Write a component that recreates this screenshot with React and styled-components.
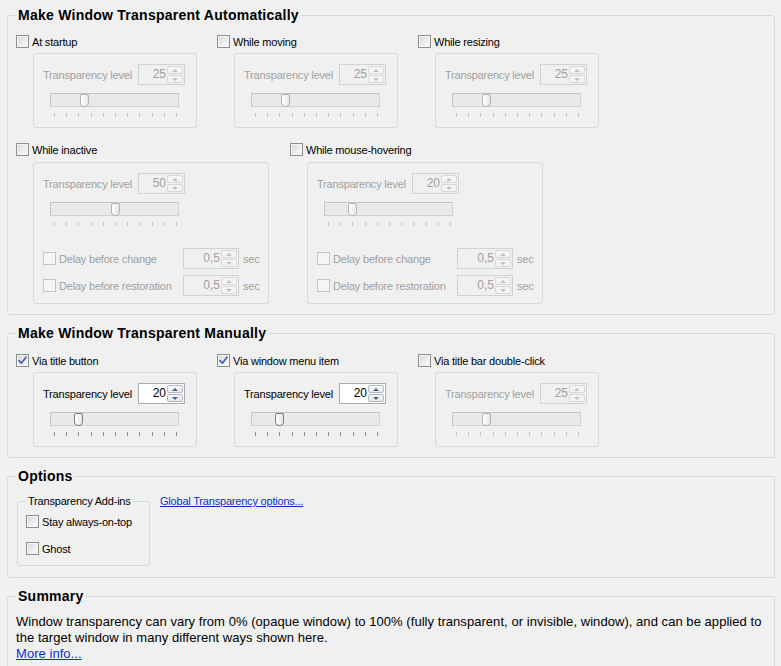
import React from "react";
import styled, { createGlobalStyle } from "styled-components";

const GlobalStyle = createGlobalStyle`
  body {
    margin: 0;
    background: #f0f0f0;
    font-family: "Liberation Sans", Arial, sans-serif;
    font-size: 11px;
    letter-spacing: -0.2px;
    color: #000;
  }
`;

const Page = styled.div`
  padding: 7px 6px 0 7px;
  display: flex;
  flex-direction: column;
  gap: 10px;
`;

const GroupBox = styled.fieldset`
  margin: 0;
  min-width: 0;
  border: 1px solid #d5d9dc;
  border-radius: 3px;
  padding: ${(p) => p.$pt ?? 12}px 8px ${(p) => p.$pb ?? 9}px 8px;
`;

const Title = styled.legend`
  font-weight: bold;
  font-size: 14px;
  line-height: 16px;
  letter-spacing: 0.25px;
  padding: 0 2px;
`;

const Row = styled.div`
  display: flex;
  margin-top: ${(p) => p.$mt ?? 0}px;
`;

const Column = styled.div`
  flex: none;
  width: ${(p) => p.$w}px;
  display: flex;
  flex-direction: column;
  align-items: flex-start;
`;

const CheckLine = styled.label`
  display: flex;
  align-items: center;
  gap: 3px;
  height: 15px;
  white-space: nowrap;
  color: ${(p) => (p.$disabled ? "#a0a0a0" : "#000")};
`;

const Box = styled.span`
  flex: none;
  width: 13px;
  height: 13px;
  box-sizing: border-box;
  border: 1px solid ${(p) => (p.$disabled ? "#c4c4c4" : "#8e8f8f")};
  background: ${(p) =>
    p.$disabled
      ? "#f4f4f4"
      : "linear-gradient(135deg, #d3d6da 0%, #eceef0 55%, #fbfbfb 100%)"};
  box-shadow: inset 0 0 0 1px ${(p) => (p.$disabled ? "#f7f7f7" : "#f4f4f4")};
  display: flex;
  align-items: center;
  justify-content: center;
`;

const Panel = styled.div`
  margin: ${(p) => p.$mt ?? 4}px 0 0 17px;
  width: ${(p) => p.$w}px;
  box-sizing: border-box;
  border: 1px solid #d9d9d9;
  border-radius: 3px;
  padding: 10px 8px ${(p) => p.$pb ?? 9}px 9px;
`;

const LevelRow = styled.div`
  display: grid;
  grid-template-columns: 95px 47px;
  align-items: center;
  height: 21px;
  color: ${(p) => (p.$disabled ? "#a0a0a0" : "#000")};
`;

const Spin = styled.div`
  display: flex;
  width: ${(p) => p.$w}px;
  height: 21px;
  box-sizing: border-box;
  border: 1px solid ${(p) => (p.$disabled ? "#d2d2d2" : "#abadb3")};
  background: ${(p) => (p.$disabled ? "#f0f0f0" : "#fff")};
  padding: 1px;
`;

const SpinValue = styled.div`
  flex: 1;
  text-align: right;
  line-height: 17px;
  font-size: 12px;
  letter-spacing: 0;
  padding-right: 1px;
  color: ${(p) => (p.$disabled ? "#a0a0a0" : "#000")};
`;

const SpinButtons = styled.div`
  width: 16px;
  display: flex;
  flex-direction: column;
  gap: 1px;
`;

const SpinButton = styled.div`
  flex: 1;
  box-sizing: border-box;
  border: 1px solid ${(p) => (p.$disabled ? "#d8d8d8" : "#b4b8c0")};
  border-radius: 2px;
  background: ${(p) =>
    p.$disabled ? "#f4f4f4" : "linear-gradient(#fbfbfb, #e4e6ea)"};
  display: flex;
  align-items: center;
  justify-content: center;
`;

const Arrow = styled.span`
  width: 0;
  height: 0;
  border-left: 3px solid transparent;
  border-right: 3px solid transparent;
  ${(p) => (p.$up ? "border-bottom" : "border-top")}: 3px solid
    ${(p) => (p.$disabled ? "#c2c2c2" : "#4c5f87")};
`;

const SliderWrap = styled.div`
  margin: 8px 0 0 7px;
  width: 129px;
`;

const Track = styled.div`
  position: relative;
  height: 14px;
  box-sizing: border-box;
  border: 1px solid #d2d2d2;
  border-top-color: #c4c4c4;
  border-left-color: #c4c4c4;
  background: #e7e9ea;
`;

const Thumb = styled.div`
  position: absolute;
  top: 0;
  width: 9px;
  height: 13px;
  box-sizing: border-box;
  border: 1px solid ${(p) => (p.$disabled ? "#b3b3b3" : "#7e7e7e")};
  border-radius: 2px 2px 4px 4px;
  background: linear-gradient(90deg, #ffffff, #e6e6e6);
`;

const Ticks = styled.div`
  display: flex;
  justify-content: space-between;
  margin: 6px 2px 0 4px;
`;

const Tick = styled.span`
  width: 1px;
  height: 4px;
  background: ${(p) => (p.$disabled ? "#c3c3c3" : "#8f8f8f")};
`;

const DelayRow = styled.div`
  display: grid;
  grid-template-columns: 140px 56px auto;
  align-items: center;
  height: 21px;
  margin-top: ${(p) => p.$mt}px;
`;

const Sec = styled.span`
  margin-left: 4px;
  color: #a0a0a0;
`;

const SubGroup = styled.fieldset`
  margin: 0;
  flex: none;
  width: 133px;
  box-sizing: border-box;
  border: 1px solid #d5d9dc;
  border-radius: 3px;
  padding: 6px 6px 9px 8px;
  display: flex;
  flex-direction: column;
  gap: 12px;
`;

const SubTitle = styled.legend`
  padding: 0 2px;
  line-height: 13px;
`;

const Link = styled.a`
  color: #0b2fd0;
  text-decoration: underline;
  cursor: pointer;
  line-height: ${(p) => p.$lh ?? 13}px;
`;

const OptionsRow = styled.div`
  display: flex;
  align-items: flex-start;
  gap: 10px;
  margin-left: 1px;
`;

const SummaryText = styled.p`
  margin: 0;
  font-size: 13px;
  line-height: 16px;
  letter-spacing: 0.05px;
  white-space: nowrap;
  padding-bottom: 30px;
`;

const CheckMark = () => (
  <svg width="9" height="9" viewBox="0 0 9 9">
    <path
      d="M1 4.6 L3.4 7.2 L8 1.2"
      stroke="#4a5fa0"
      strokeWidth="1.7"
      fill="none"
      strokeLinecap="round"
      strokeLinejoin="round"
    />
  </svg>
);

const Check = ({ label, checked, disabled, faded }) => (
  <CheckLine $disabled={faded}>
    <Box $disabled={disabled}>{checked && <CheckMark />}</Box>
    {label}
  </CheckLine>
);

const SpinBox = ({ value, width, disabled }) => (
  <Spin $w={width} $disabled={disabled}>
    <SpinValue $disabled={disabled}>{value}</SpinValue>
    <SpinButtons>
      <SpinButton $disabled={disabled}>
        <Arrow $up $disabled={disabled} />
      </SpinButton>
      <SpinButton $disabled={disabled}>
        <Arrow $disabled={disabled} />
      </SpinButton>
    </SpinButtons>
  </Spin>
);

const Slider = ({ value, disabled }) => (
  <SliderWrap>
    <Track>
      <Thumb $disabled={disabled} style={{ left: 3 + value * 1.22 - 4.5 }} />
    </Track>
    <Ticks>
      {Array.from({ length: 11 }).map((_, i) => (
        <Tick key={i} $disabled={disabled} />
      ))}
    </Ticks>
  </SliderWrap>
);

const Level = ({ value, disabled }) => (
  <>
    <LevelRow $disabled={disabled}>
      <span>Transparency level</span>
      <SpinBox value={value} width={47} disabled={disabled} />
    </LevelRow>
    <Slider value={value} disabled={disabled} />
  </>
);

const Option = ({ width, label, checked, value, disabled }) => (
  <Column $w={width}>
    <Check label={label} checked={checked} />
    <Panel $w={164} $pb={10}>
      <Level value={value} disabled={disabled} />
    </Panel>
  </Column>
);

const DelayOption = ({ width, label, value }) => (
  <Column $w={width}>
    <Check label={label} />
    <Panel $w={236} $mt={5} $pb={7}>
      <Level value={value} disabled />
      <DelayRow $mt={22}>
        <Check label="Delay before change" disabled faded />
        <SpinBox value="0,5" width={56} disabled />
        <Sec>sec</Sec>
      </DelayRow>
      <DelayRow $mt={6}>
        <Check label="Delay before restoration" disabled faded />
        <SpinBox value="0,5" width={56} disabled />
        <Sec>sec</Sec>
      </DelayRow>
    </Panel>
  </Column>
);

export default function App() {
  return (
    <>
      <GlobalStyle />
      <Page>
        <GroupBox $pt={11} $pb={10}>
          <Title>Make Window Transparent Automatically</Title>
          <Row>
            <Option width={201} label="At startup" value={25} disabled />
            <Option width={201} label="While moving" value={25} disabled />
            <Option width={200} label="While resizing" value={25} disabled />
          </Row>
          <Row $mt={14}>
            <DelayOption width={274} label="While inactive" value={50} />
            <DelayOption width={260} label="While mouse-hovering" value={20} />
          </Row>
        </GroupBox>

        <GroupBox $pt={12} $pb={10}>
          <Title>Make Window Transparent Manually</Title>
          <Row>
            <Option width={201} label="Via title button" checked value={20} />
            <Option width={201} label="Via window menu item" checked value={20} />
            <Option width={200} label="Via title bar double-click" value={25} disabled />
          </Row>
        </GroupBox>

        <GroupBox $pt={11} $pb={11}>
          <Title>Options</Title>
          <OptionsRow>
            <SubGroup>
              <SubTitle>Transparency Add-ins</SubTitle>
              <Check label="Stay always-on-top" />
              <Check label="Ghost" />
            </SubGroup>
            <Link>Global Transparency options...</Link>
          </OptionsRow>
        </GroupBox>

        <GroupBox $pt={10}>
          <Title>Summary</Title>
          <SummaryText>
            Window transparency can vary from 0% (opaque window) to 100% (fully
            transparent, or invisible, window), and can be applied to
            <br />
            the target window in many different ways shown here.
            <br />
            <Link $lh={16}>More info...</Link>
          </SummaryText>
        </GroupBox>
      </Page>
    </>
  );
}
